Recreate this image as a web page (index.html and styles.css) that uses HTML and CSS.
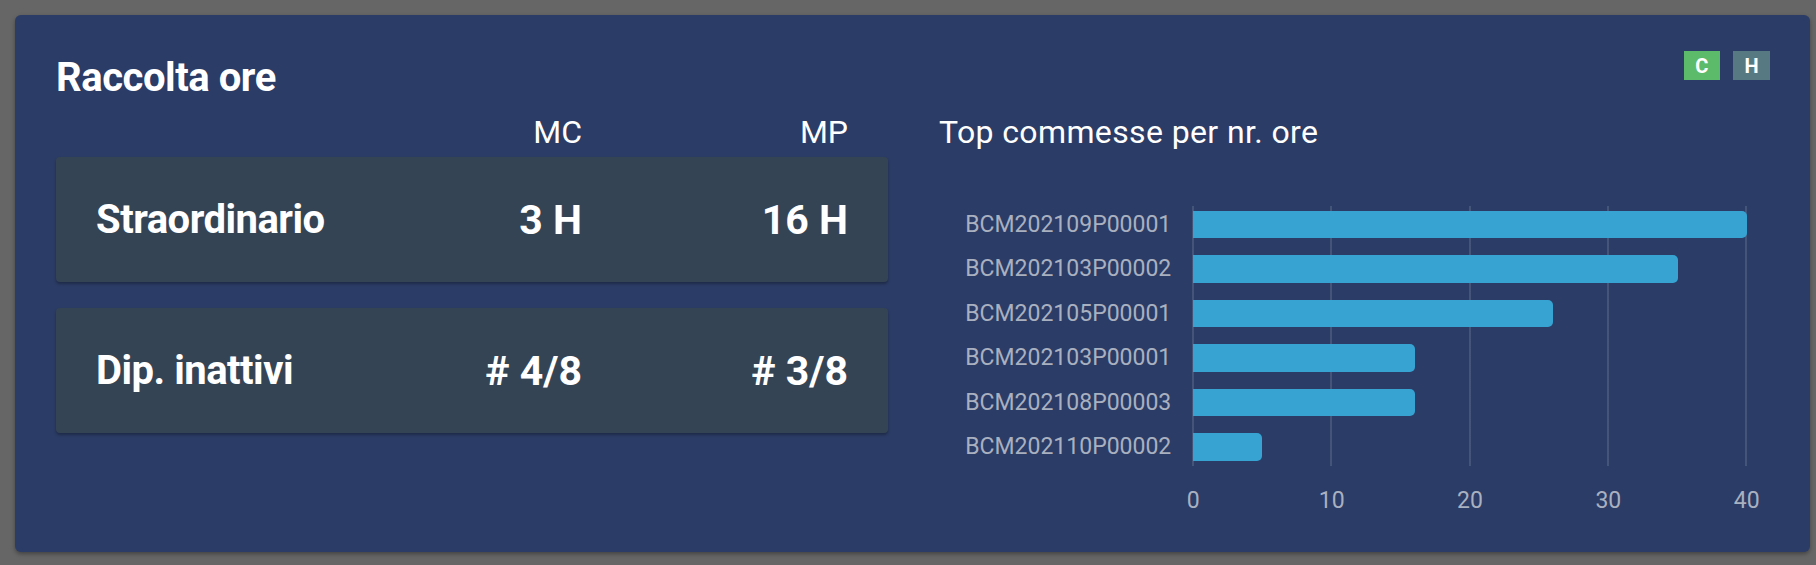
FILE: index.html
```html
<!DOCTYPE html>
<html lang="it">
<head>
<meta charset="utf-8">
<title>Raccolta ore</title>
<link rel="stylesheet" href="styles.css">
</head>
<body>
<div class="card">
  <header class="card-head">
    <h1 class="title">Raccolta ore</h1>
    <div class="badges">
      <span class="badge badge-c">C</span>
      <span class="badge badge-h">H</span>
    </div>
  </header>
  <div class="card-body">
    <section class="summary">
      <div class="summary-head"><span></span><span>MC</span><span>MP</span></div>
      <div class="stat">
        <span class="stat-label">Straordinario</span>
        <span class="stat-val">3 H</span>
        <span class="stat-val">16 H</span>
      </div>
      <div class="stat">
        <span class="stat-label">Dip. inattivi</span>
        <span class="stat-val"># 4/8</span>
        <span class="stat-val"># 3/8</span>
      </div>
    </section>
    <section class="chart-panel">
      <h2 class="chart-title">Top commesse per nr. ore</h2>
      <div class="chart">
        <div class="chart-labels">
          <span>BCM202109P00001</span>
          <span>BCM202103P00002</span>
          <span>BCM202105P00001</span>
          <span>BCM202103P00001</span>
          <span>BCM202108P00003</span>
          <span>BCM202110P00002</span>
        </div>
        <div class="plot">
          <div class="bar-row"><div class="bar" style="width:100%"></div></div>
          <div class="bar-row"><div class="bar" style="width:87.5%"></div></div>
          <div class="bar-row"><div class="bar" style="width:65%"></div></div>
          <div class="bar-row"><div class="bar" style="width:40%"></div></div>
          <div class="bar-row"><div class="bar" style="width:40%"></div></div>
          <div class="bar-row"><div class="bar" style="width:12.5%"></div></div>
        </div>
      </div>
      <div class="ticks">
        <span>0</span><span>10</span><span>20</span><span>30</span><span>40</span>
      </div>
    </section>
  </div>
</div>
</body>
</html>
```

FILE: styles.css
```css
* {
  box-sizing: border-box;
}

body {
  margin: 0;
  padding: 15px 6px 13px 15px;
  background: #666666;
  font-family: Roboto, "Liberation Sans", sans-serif;
  color: #ffffff;
}

.card {
  height: 537px;
  padding: 36px 40px 0 41px;
  background: #2b3c66;
  border-radius: 6px;
  box-shadow: 0 2px 4px rgba(0, 0, 0, 0.35);
}

.card-head {
  display: flex;
  justify-content: space-between;
  align-items: flex-start;
  height: 51px;
}

.title {
  margin: 3px 0 0;
  font-size: 40px;
  line-height: 48px;
  font-weight: 700;
  letter-spacing: -0.45px;
}

.badges {
  display: flex;
  gap: 13px;
}

.badge {
  height: 29px;
  padding: 0 11.5px;
  display: flex;
  align-items: center;
  justify-content: center;
  font-size: 20px;
  font-weight: 700;
  color: #ffffff;
}

.badge-c {
  background: #5cba6b;
}

.badge-h {
  background: #577a82;
}

.card-body {
  display: grid;
  grid-template-columns: 832px 1fr;
  column-gap: 51px;
  margin-top: 11px;
}

.summary-head {
  display: grid;
  grid-template-columns: 1fr 150px 266px;
  padding: 0 40px;
  margin-bottom: 6px;
  font-size: 32px;
  line-height: 38px;
  text-align: right;
}

.stat {
  display: grid;
  grid-template-columns: 1fr 150px 266px;
  align-items: center;
  height: 125px;
  padding: 0 40px;
  background: #354455;
  border-radius: 4px;
  box-shadow: 0 2px 3px rgba(0, 0, 0, 0.3);
}

.stat + .stat {
  margin-top: 26px;
}

.stat-label {
  font-size: 40px;
  font-weight: 700;
  letter-spacing: -0.5px;
}

.stat-val {
  font-size: 41px;
  font-weight: 700;
  text-align: right;
}

.chart-title {
  margin: 0;
  font-size: 32px;
  line-height: 38px;
  font-weight: 400;
  letter-spacing: 0.38px;
}

.chart {
  display: flex;
  margin-top: 55px;
}

.chart-labels {
  width: 253.3px;
  padding: 5px 21px 5px 0;
  display: flex;
  flex-direction: column;
  gap: 17.2px;
  text-align: right;
  font-size: 23px;
  color: #a9b0c0;
}

.chart-labels span {
  height: 27.3px;
  line-height: 27.3px;
}

.plot {
  width: 555.4px;
  height: 260px;
  padding: 5px 1px;
  display: flex;
  flex-direction: column;
  gap: 17.2px;
  background: repeating-linear-gradient(to right, rgba(255, 255, 255, 0.12) 0 2px, transparent 2px 138.35px);
}

.bar-row {
  height: 27.3px;
}

.bar {
  height: 100%;
  background: #36a3d3;
  border-radius: 0 5px 5px 0;
}

.ticks {
  display: flex;
  justify-content: space-between;
  width: 593.4px;
  margin-left: 234.3px;
  margin-top: 20.7px;
  font-size: 23px;
  line-height: 27px;
  color: #a9b0c0;
}

.ticks span {
  width: 40px;
  text-align: center;
}
```
